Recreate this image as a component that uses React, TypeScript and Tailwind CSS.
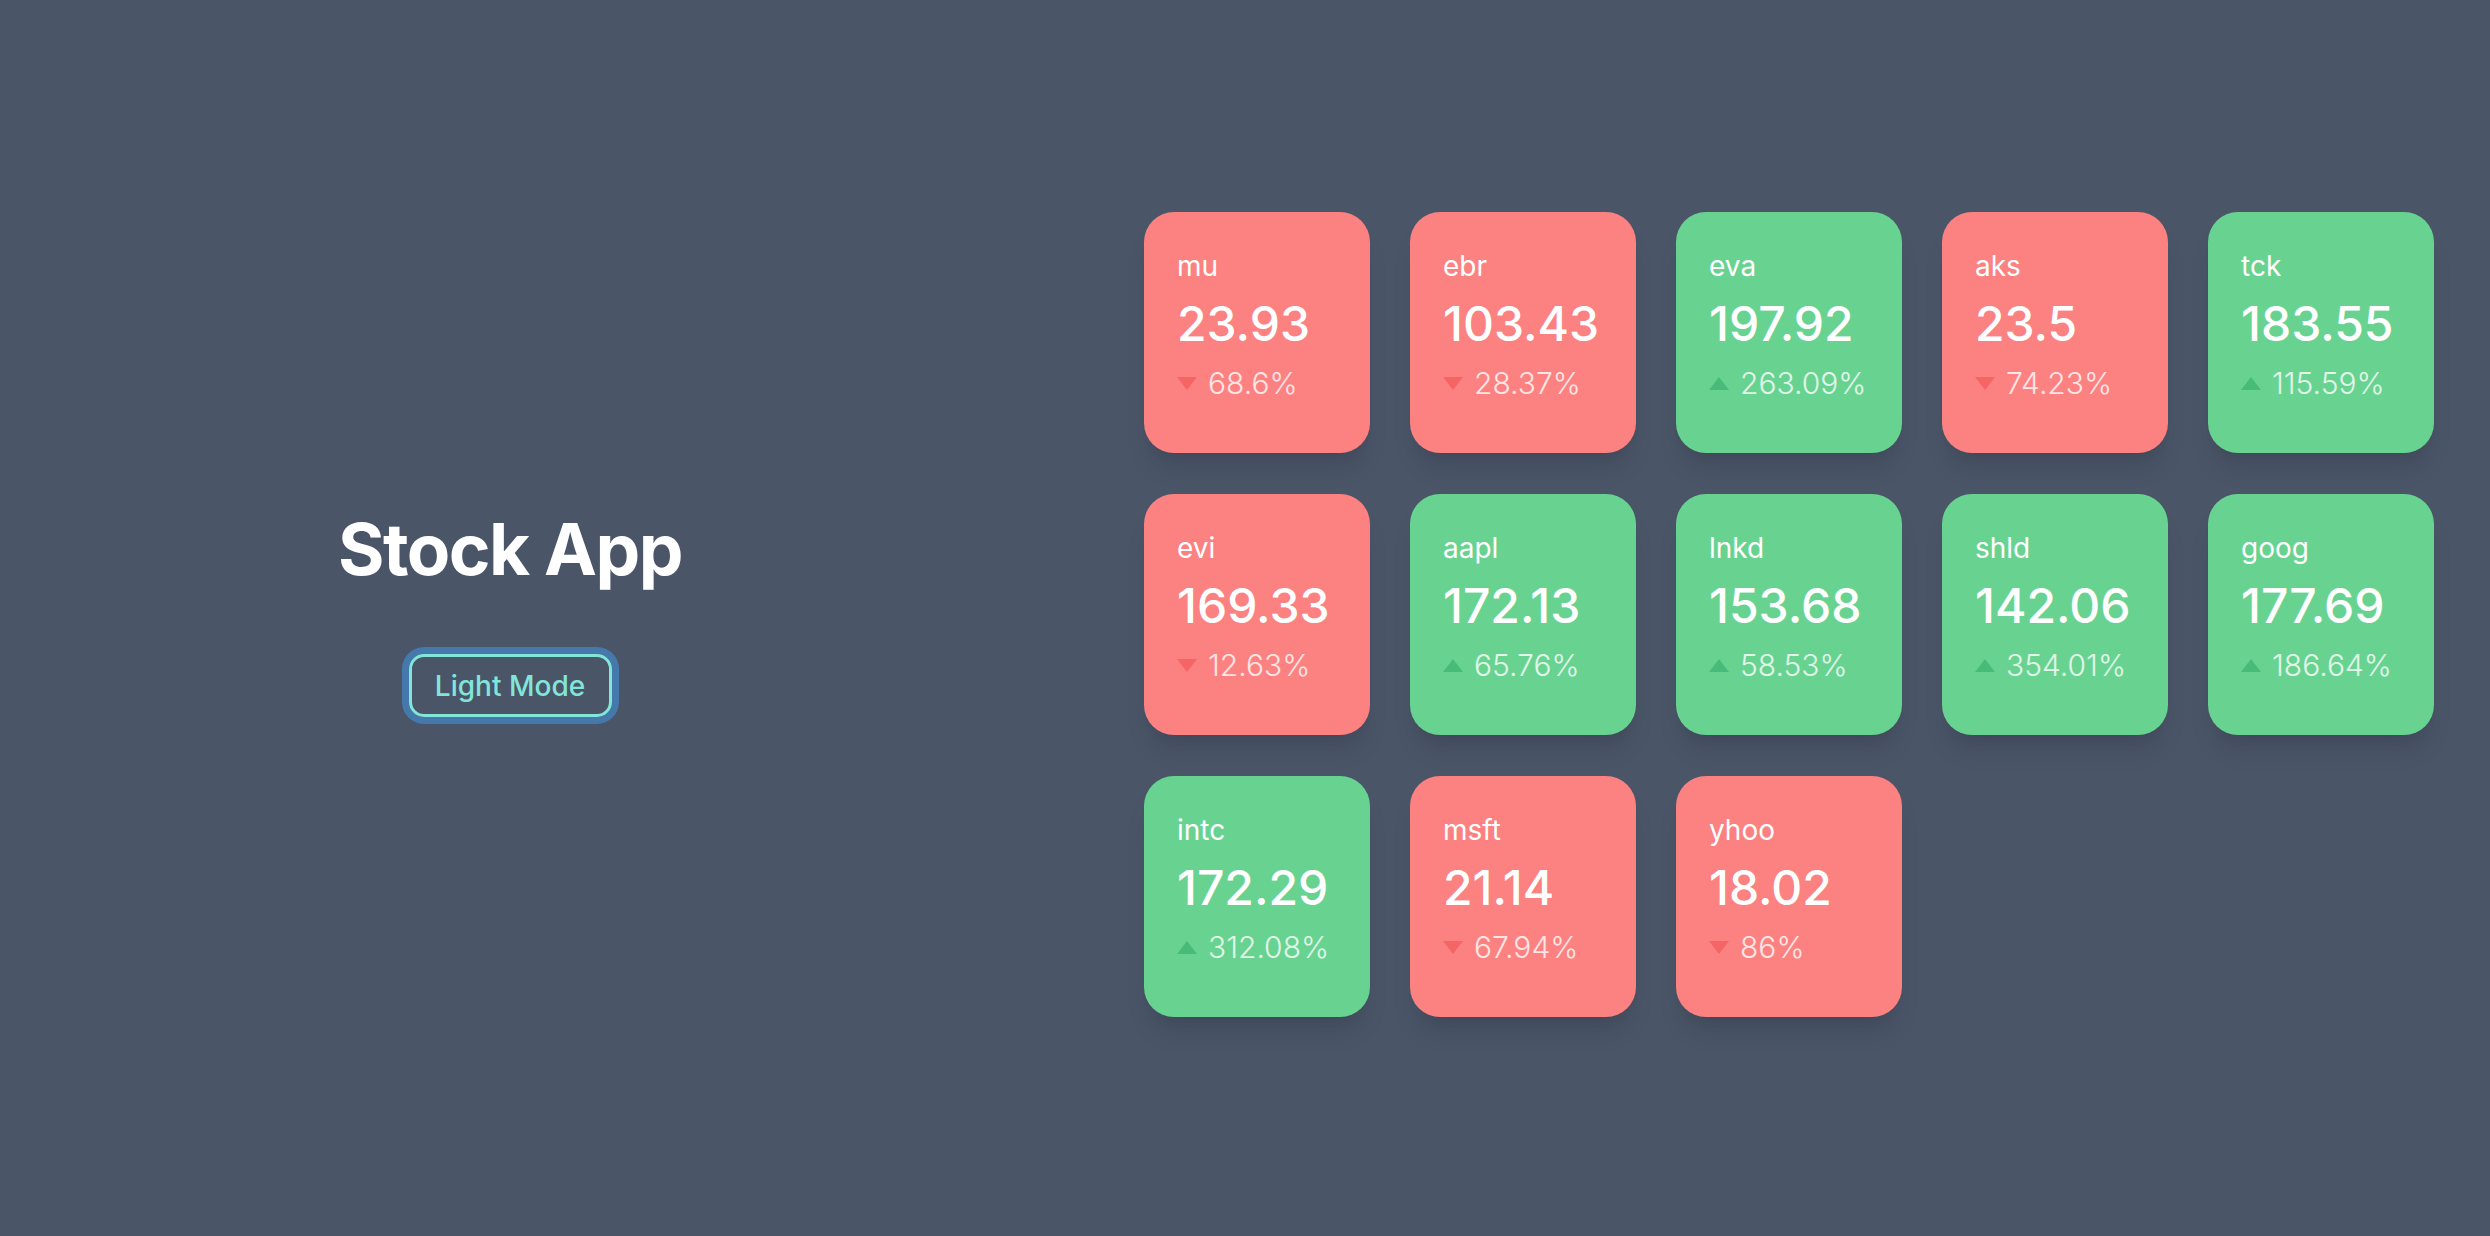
const stocks = [
  { name: 'mu', price: '23.93', change: '68.6%', up: false },
  { name: 'ebr', price: '103.43', change: '28.37%', up: false },
  { name: 'eva', price: '197.92', change: '263.09%', up: true },
  { name: 'aks', price: '23.5', change: '74.23%', up: false },
  { name: 'tck', price: '183.55', change: '115.59%', up: true },
  { name: 'evi', price: '169.33', change: '12.63%', up: false },
  { name: 'aapl', price: '172.13', change: '65.76%', up: true },
  { name: 'lnkd', price: '153.68', change: '58.53%', up: true },
  { name: 'shld', price: '142.06', change: '354.01%', up: true },
  { name: 'goog', price: '177.69', change: '186.64%', up: true },
  { name: 'intc', price: '172.29', change: '312.08%', up: true },
  { name: 'msft', price: '21.14', change: '67.94%', up: false },
  { name: 'yhoo', price: '18.02', change: '86%', up: false },
];

function Arrow({ up }: { up: boolean }) {
  return (
    <svg width="20" height="13" viewBox="0 0 20 13" className="shrink-0">
      {up ? (
        <polygon points="10,0 20,13 0,13" fill="#48bb78" />
      ) : (
        <polygon points="0,0 20,0 10,13" fill="#f56565" />
      )}
    </svg>
  );
}

function StockCard({ name, price, change, up }: (typeof stocks)[number]) {
  return (
    <div
      className={`w-[226px] h-[241px] rounded-[30px] px-[33px] pt-[37px] text-white shadow-[0_20px_25px_-5px_rgba(0,0,0,0.1),0_10px_10px_-5px_rgba(0,0,0,0.04)] ${
        up ? 'bg-[#68d391]' : 'bg-[#fc8181]'
      }`}
    >
      <div className="text-[28px] leading-[34px]">{name}</div>
      <div className="mt-[12px] text-[48px] leading-[58px] font-medium">{price}</div>
      <div className="mt-[13px] flex items-center gap-[11px] h-[34px]">
        <Arrow up={up} />
        <span className="text-[30px] leading-[34px] font-light text-white/80">{change}</span>
      </div>
    </div>
  );
}

export default function App() {
  return (
    <div
      className="h-screen w-full bg-[#4a5568] flex items-center pb-[7px] overflow-hidden"
      style={{ fontFamily: 'Inter, "Noto Sans", sans-serif' }}
    >
      {/* Title + toggle */}
      <div className="w-[1020px] flex flex-col items-center">
        <h1 className="text-[71px] leading-[74px] font-bold text-white tracking-[-1.5px]">Stock App</h1>
        <button className="mt-[68px] w-[203px] h-[63px] rounded-[15px] border-[3px] border-[#81e6d9] text-[#81e6d9] text-[28px] font-medium shadow-[0_0_0_7px_#4679ab]">
          Light Mode
        </button>
      </div>

      {/* Stock grid */}
      <div className="ml-[124px] grid grid-cols-[repeat(5,226px)] gap-x-[40px] gap-y-[41px]">
        {stocks.map((s) => (
          <StockCard key={s.name} {...s} />
        ))}
      </div>
    </div>
  );
}
